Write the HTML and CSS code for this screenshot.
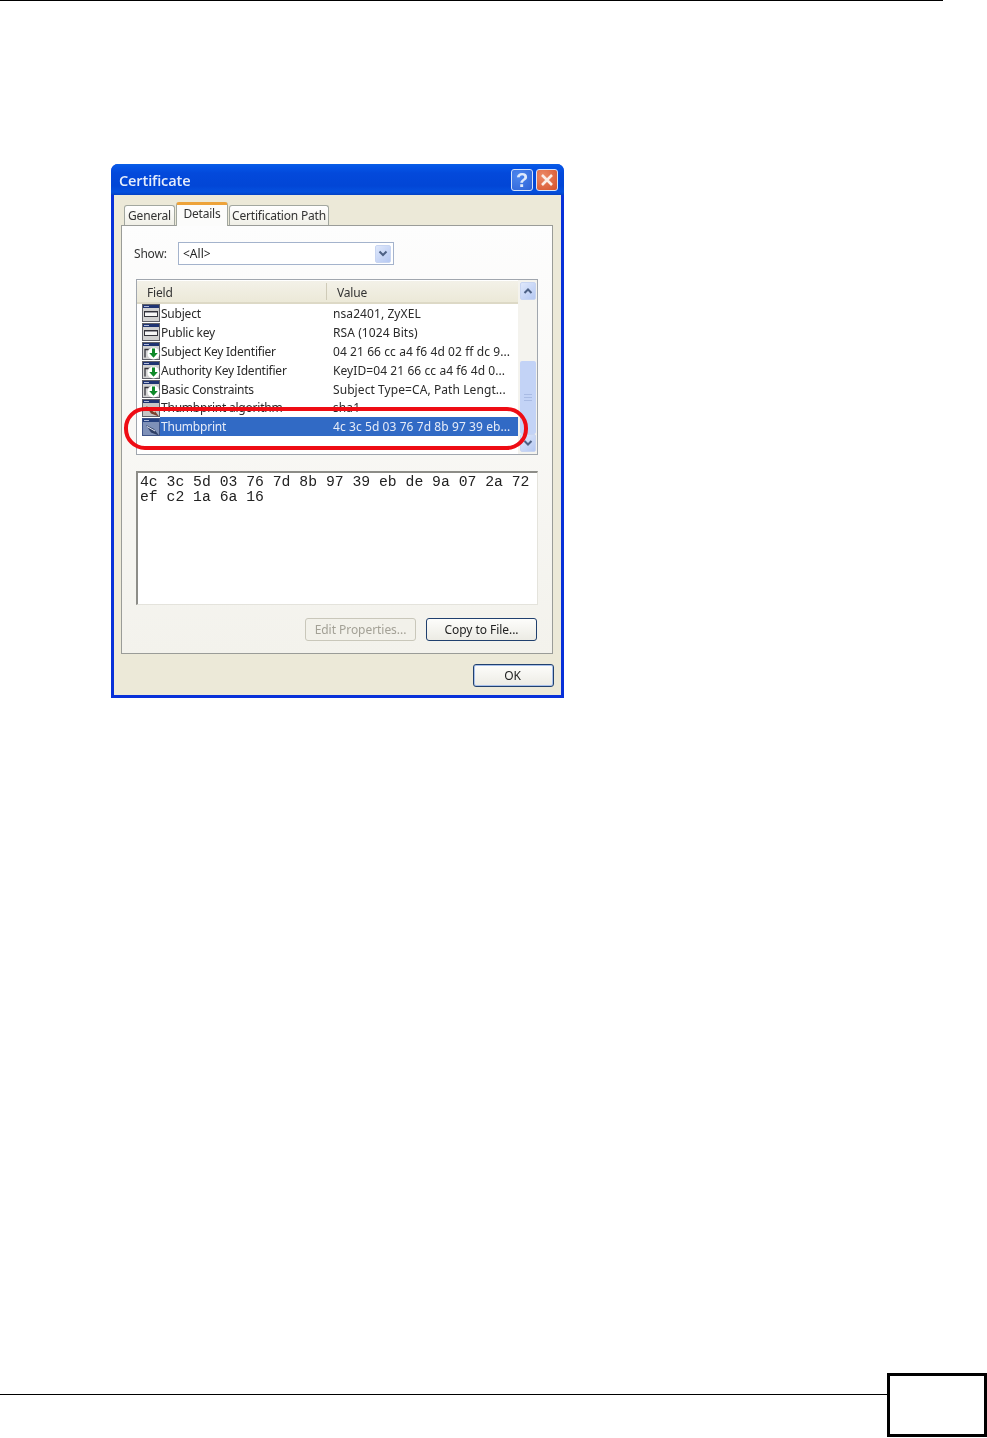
FILE: index.html
```html
<!DOCTYPE html>
<html lang="en">
<head>
<meta charset="utf-8">
<title>Certificate</title>
<link rel="stylesheet" href="styles.css">
</head>
<body>
<svg class="defs" width="0" height="0" aria-hidden="true">
  <symbol id="i-field" viewBox="0 0 18 18">
    <rect x="0.5" y="0.5" width="17" height="17" fill="#d2d2d2" stroke="#5f6068"/>
    <rect x="1" y="1" width="16" height="3" fill="#1f3473"/>
    <rect x="2" y="2" width="5" height="1" fill="#aeb8d6"/>
    <rect x="2.500" y="7.500" width="13" height="5" fill="#f6f6f6" stroke="#33333b"/>
    <rect x="3" y="8" width="12" height="1" fill="#9a9aa2"/>
  </symbol>
  <symbol id="i-ext" viewBox="0 0 18 18">
    <rect x="0.5" y="0.5" width="17" height="17" fill="#d2d2d2" stroke="#5f6068"/>
    <rect x="1" y="1" width="16" height="3" fill="#1f3473"/>
    <rect x="2" y="2" width="5" height="1" fill="#aeb8d6"/>
    <path d="M3 15.500V7.500h10" fill="none" stroke="#33333b" stroke-width="1.300"/>
    <circle cx="11.500" cy="11.500" r="6" fill="#fff"/>
    <path d="M10 6.500h3v4.500h2.800l-4.300 4.800-4.300-4.800H10z" fill="#0f8a2a"/>
  </symbol>
  <symbol id="i-thumb" viewBox="0 0 18 18">
    <rect x="0.5" y="0.5" width="17" height="17" fill="#c6c6c6" stroke="#5f6068"/>
    <rect x="1" y="1" width="16" height="3" fill="#1f3473"/>
    <rect x="2" y="2" width="5" height="1" fill="#aeb8d6"/>
    <path d="M4 7l8 4 5 6.500-8-3z" fill="#7a3f2c"/>
    <path d="M5 8.500l8 4.500" stroke="#f1e9cc"/>
  </symbol>
  <symbol id="i-thumb-sel" viewBox="0 0 18 18">
    <rect x="0.5" y="0.5" width="17" height="17" fill="#7e90b8" stroke="#3f5488"/>
    <rect x="1" y="1" width="16" height="3" fill="#24407f"/>
    <rect x="2" y="2" width="5" height="1" fill="#aeb8d6"/>
    <path d="M4 7l8 4 5 6.500-8-3z" fill="#2f3f66"/>
    <path d="M5 8.500l8 4.500" stroke="#e3e7f2"/>
  </symbol>
</svg>

<div class="page">
  <div class="top-rule"></div>

  <section class="dialog">
    <header class="titlebar">
      <span class="title">Certificate</span>
      <span class="win-btns">
        <span class="win-btn help">?</span>
        <span class="win-btn close">
          <svg width="14" height="14" viewBox="0 0 14 14"><path d="M2 2l10 10M12 2L2 12" stroke="#fbeee8" stroke-width="2.600"/></svg>
        </span>
      </span>
    </header>

    <div class="client">
      <nav class="tabs">
        <span class="tab tab-general">General</span>
        <span class="tab tab-active">Details</span>
        <span class="tab tab-path">Certification Path</span>
      </nav>

      <div class="panel">
        <div class="show-row">
          <label class="show-label">Show:</label>
          <div class="select">
            <span class="select-value">&lt;All&gt;</span>
            <span class="select-btn">
              <svg width="10" height="8" viewBox="0 0 10 8"><path d="M1.500 1.500L5 5l3.500-3.500" fill="none" stroke="#4d6185" stroke-width="2"/></svg>
            </span>
          </div>
        </div>

        <div class="list">
          <div class="list-main">
            <div class="list-head">
              <span class="head-field">Field</span>
              <span class="head-value">Value</span>
            </div>
            <div class="rows">
              <div class="row"><svg class="ico"><use href="#i-field"/></svg><span class="c-field">Subject</span><span class="c-value">nsa2401, ZyXEL</span></div>
              <div class="row"><svg class="ico"><use href="#i-field"/></svg><span class="c-field">Public key</span><span class="c-value">RSA (1024 Bits)</span></div>
              <div class="row"><svg class="ico"><use href="#i-ext"/></svg><span class="c-field">Subject Key Identifier</span><span class="c-value">04 21 66 cc a4 f6 4d 02 ff dc 9...</span></div>
              <div class="row"><svg class="ico"><use href="#i-ext"/></svg><span class="c-field">Authority Key Identifier</span><span class="c-value">KeyID=04 21 66 cc a4 f6 4d 0...</span></div>
              <div class="row"><svg class="ico"><use href="#i-ext"/></svg><span class="c-field">Basic Constraints</span><span class="c-value">Subject Type=CA, Path Lengt...</span></div>
              <div class="row"><svg class="ico"><use href="#i-thumb"/></svg><span class="c-field">Thumbprint algorithm</span><span class="c-value">sha1</span></div>
              <div class="row row-selected"><svg class="ico"><use href="#i-thumb-sel"/></svg><span class="c-field">Thumbprint</span><span class="c-value">4c 3c 5d 03 76 7d 8b 97 39 eb...</span></div>
            </div>
          </div>
          <div class="scrollbar">
            <span class="sb-btn">
              <svg width="10" height="8" viewBox="0 0 10 8"><path d="M1.500 6L5 2.500 8.500 6" fill="none" stroke="#4d6185" stroke-width="2"/></svg>
            </span>
            <span class="sb-track"><span class="sb-thumb"><span class="grip"></span></span></span>
            <span class="sb-btn sb-down">
              <svg width="10" height="8" viewBox="0 0 10 8"><path d="M1.500 2L5 5.500 8.500 2" fill="none" stroke="#4d6185" stroke-width="2"/></svg>
            </span>
          </div>
          <div class="highlight-ring"></div>
        </div>

        <div class="detail">4c 3c 5d 03 76 7d 8b 97 39 eb de 9a 07 2a 72
ef c2 1a 6a 16</div>

        <div class="panel-buttons">
          <span class="btn btn-disabled">Edit Properties...</span>
          <span class="btn">Copy to File...</span>
        </div>
      </div>

      <div class="dialog-buttons">
        <span class="btn btn-ok">OK</span>
      </div>
    </div>
  </section>

  <footer class="footer">
    <div class="footer-rule"></div>
    <div class="page-box"></div>
  </footer>
</div>
</body>
</html>
```
FILE: styles.css
```css
* { box-sizing: border-box; }
html, body { margin: 0; padding: 0; background: #fff; }
.defs { position: absolute; }

.page {
  width: 987px;
  height: 1438px;
  display: flex;
  flex-direction: column;
  overflow: hidden;
}
.top-rule { width: 943px; height: 1px; background: #000; flex: none; }

.dialog {
  flex: none;
  width: 453px;
  height: 534px;
  margin: 163px 0 0 111px;
  display: flex;
  flex-direction: column;
  border-radius: 7px 7px 0 0;
  background: #0831d9;
  font: 12px/1 "Noto Sans", Tahoma, sans-serif;
  color: #222;
  overflow: hidden;
  filter: blur(0.4px);
}

.titlebar {
  flex: none;
  height: 31px;
  padding: 2px 6px 0 8px;
  display: flex;
  align-items: center;
  justify-content: space-between;
  background: linear-gradient(#0a5fe6 0, #0555e6 8%, #0349db 30%, #0246d6 70%, #0450de 90%, #0442c4 100%);
}
.title {
  color: #e6edfb;
  font: 600 14.600px/1 "Open Sans", sans-serif;
  letter-spacing: -0.15px;
}
.win-btns { display: flex; gap: 3px; margin-top: -2px; }
.win-btn {
  width: 22px;
  height: 22px;
  border: 1px solid #d5e2f8;
  border-radius: 3px;
  display: flex;
  align-items: center;
  justify-content: center;
}
.help {
  background: radial-gradient(circle at 30% 30%, #4c86ee, #2d62d6);
  color: #dfe9fb;
  font: 700 20px/1 "Liberation Sans", sans-serif;
}
.close { background: radial-gradient(circle at 30% 30%, #ec8a66, #d4502a); }

.client {
  flex: 1;
  margin: 0 3px 3px;
  padding: 8px 8px 8px 7px;
  background: #ece9d8;
  display: flex;
  flex-direction: column;
}

.tabs {
  flex: none;
  height: 23px;
  display: flex;
  align-items: flex-end;
  padding-left: 3px;
  gap: 1px;
  position: relative;
  z-index: 1;
  margin-bottom: -1px;
}
.tab {
  height: 20px;
  display: flex;
  align-items: center;
  justify-content: center;
  border: 1px solid #a2a79f;
  border-bottom: 0;
  border-radius: 3px 3px 0 0;
  background: linear-gradient(#fff, #f0efe6);
  color: #333;
  letter-spacing: -0.2px;
  white-space: nowrap;
}
.tab-general { width: 51px; margin-bottom: 1px; }
.tab-path { width: 100px; margin-bottom: 1px; }
.tab-active {
  width: 52px;
  height: 24px;
  padding-bottom: 4px;
  background: #fcfcfb;
  border-top: 3px solid #eda33a;
}

.panel {
  flex: none;
  height: 429px;
  padding: 16px 14px 12px;
  border: 1px solid #9a9c98;
  background: linear-gradient(#fdfdfd, #f3f2ec);
  display: flex;
  flex-direction: column;
}

.show-row { display: flex; align-items: center; height: 23px; flex: none; }
.show-label { width: 44px; margin-left: -2px; color: #333; letter-spacing: -0.2px; }
.select {
  width: 216px;
  height: 23px;
  padding: 0 2px 0 4px;
  border: 1px solid #a4b3cc;
  background: #fff;
  display: flex;
  align-items: center;
  justify-content: space-between;
}
.select-btn, .sb-btn {
  width: 16px;
  height: 18px;
  border-radius: 2px;
  background: linear-gradient(135deg, #dfe8fb, #b5c8f2);
  border: 1px solid #c8d5f1;
  display: flex;
  align-items: center;
  justify-content: center;
  flex: none;
}

.list {
  flex: none;
  position: relative;
  height: 176px;
  margin-top: 14px;
  border: 1px solid #a0a6ae;
  background: #fff;
  display: flex;
}
.list-main { width: 381px; padding-top: 1px; flex: none; }
.list-head {
  height: 23px;
  display: flex;
  align-items: center;
  background: linear-gradient(#f3f1e8, #ece9d8);
  border-bottom: 2px solid #ddd9c6;
  color: #333;
}
.head-field { width: 190px; padding: 2px 0 0 10px; border-right: 1px solid #cfcbb8; height: 17px; display: flex; align-items: center; letter-spacing: -0.2px; }
.head-value { padding: 2px 0 0 10px; letter-spacing: -0.2px; }

.rows { display: flex; flex-direction: column; }
.row {
  height: 18.900px;
  display: flex;
  align-items: center;
  padding-left: 5px;
  color: #2a2a2a;
}
.ico { width: 18px; height: 18px; flex: none; }
.c-field { width: 173px; padding-left: 1px; height: 19px; line-height: 19px; flex: none; white-space: nowrap; letter-spacing: -0.22px; }
.c-value { height: 19px; line-height: 19px; flex: 1; white-space: nowrap; letter-spacing: 0.08px; }
.row-selected .c-field,
.row-selected .c-value { background: #316ac5; color: #e6ecf8; }

.scrollbar {
  flex: 1;
  padding: 2px 1px 2px 2px;
  background: #f4f3ee;
  display: flex;
  flex-direction: column;
}
.sb-track { flex: 1; display: flex; align-items: flex-end; }
.sb-thumb {
  width: 16px;
  height: 73px;
  background: #c3d3f6;
  border-radius: 2px;
  display: flex;
  align-items: center;
  justify-content: center;
}
.grip {
  width: 8px;
  height: 7px;
  border-top: 1px solid #a9bbe4;
  border-bottom: 1px solid #a9bbe4;
  background: linear-gradient(#a9bbe4, #a9bbe4) center / 100% 1px no-repeat;
}

.highlight-ring {
  position: absolute;
  left: -13px;
  top: 127px;
  width: 404px;
  height: 43px;
  border: 4.500px solid #ee0c14;
  border-radius: 21px;
}

.detail {
  flex: none;
  height: 134px;
  margin-top: 16px;
  padding: 2px 2px;
  border: 1px solid #e4e3dc;
  border-left: 2px solid #8d8d88;
  border-top: 2px solid #8d8d88;
  background: #fff;
  color: #222;
  font: 14.750px/15px "Liberation Mono", monospace;
  white-space: pre;
}

.panel-buttons {
  flex: none;
  margin: 13px 1px 0 0;
  display: flex;
  justify-content: flex-end;
  gap: 10px;
}
.btn {
  width: 111px;
  height: 23px;
  display: flex;
  align-items: center;
  justify-content: center;
  border: 1px solid #20406e;
  border-radius: 3px;
  background: linear-gradient(#fdfdfb, #ecebe4);
  color: #222;
  letter-spacing: -0.05px;
}
.btn-disabled {
  border-color: #c9c7ba;
  background: #f2f1ea;
  color: #a3a196;
}
.dialog-buttons {
  flex: none;
  margin-top: 10px;
  display: flex;
  justify-content: flex-end;
}
.btn-ok {
  width: 81px;
  margin-right: -1px;
  padding-right: 2px;
  box-shadow: inset 0 0 0 1px #a8c0ea;
}

.footer {
  margin-top: auto;
  height: 65px;
  display: flex;
  align-items: flex-start;
  flex: none;
}
.footer-rule { width: 887px; height: 1px; margin-top: 21px; background: #000; flex: none; }
.page-box { width: 100px; height: 64px; border: 3px solid #000; flex: none; background: #fff; }
```
